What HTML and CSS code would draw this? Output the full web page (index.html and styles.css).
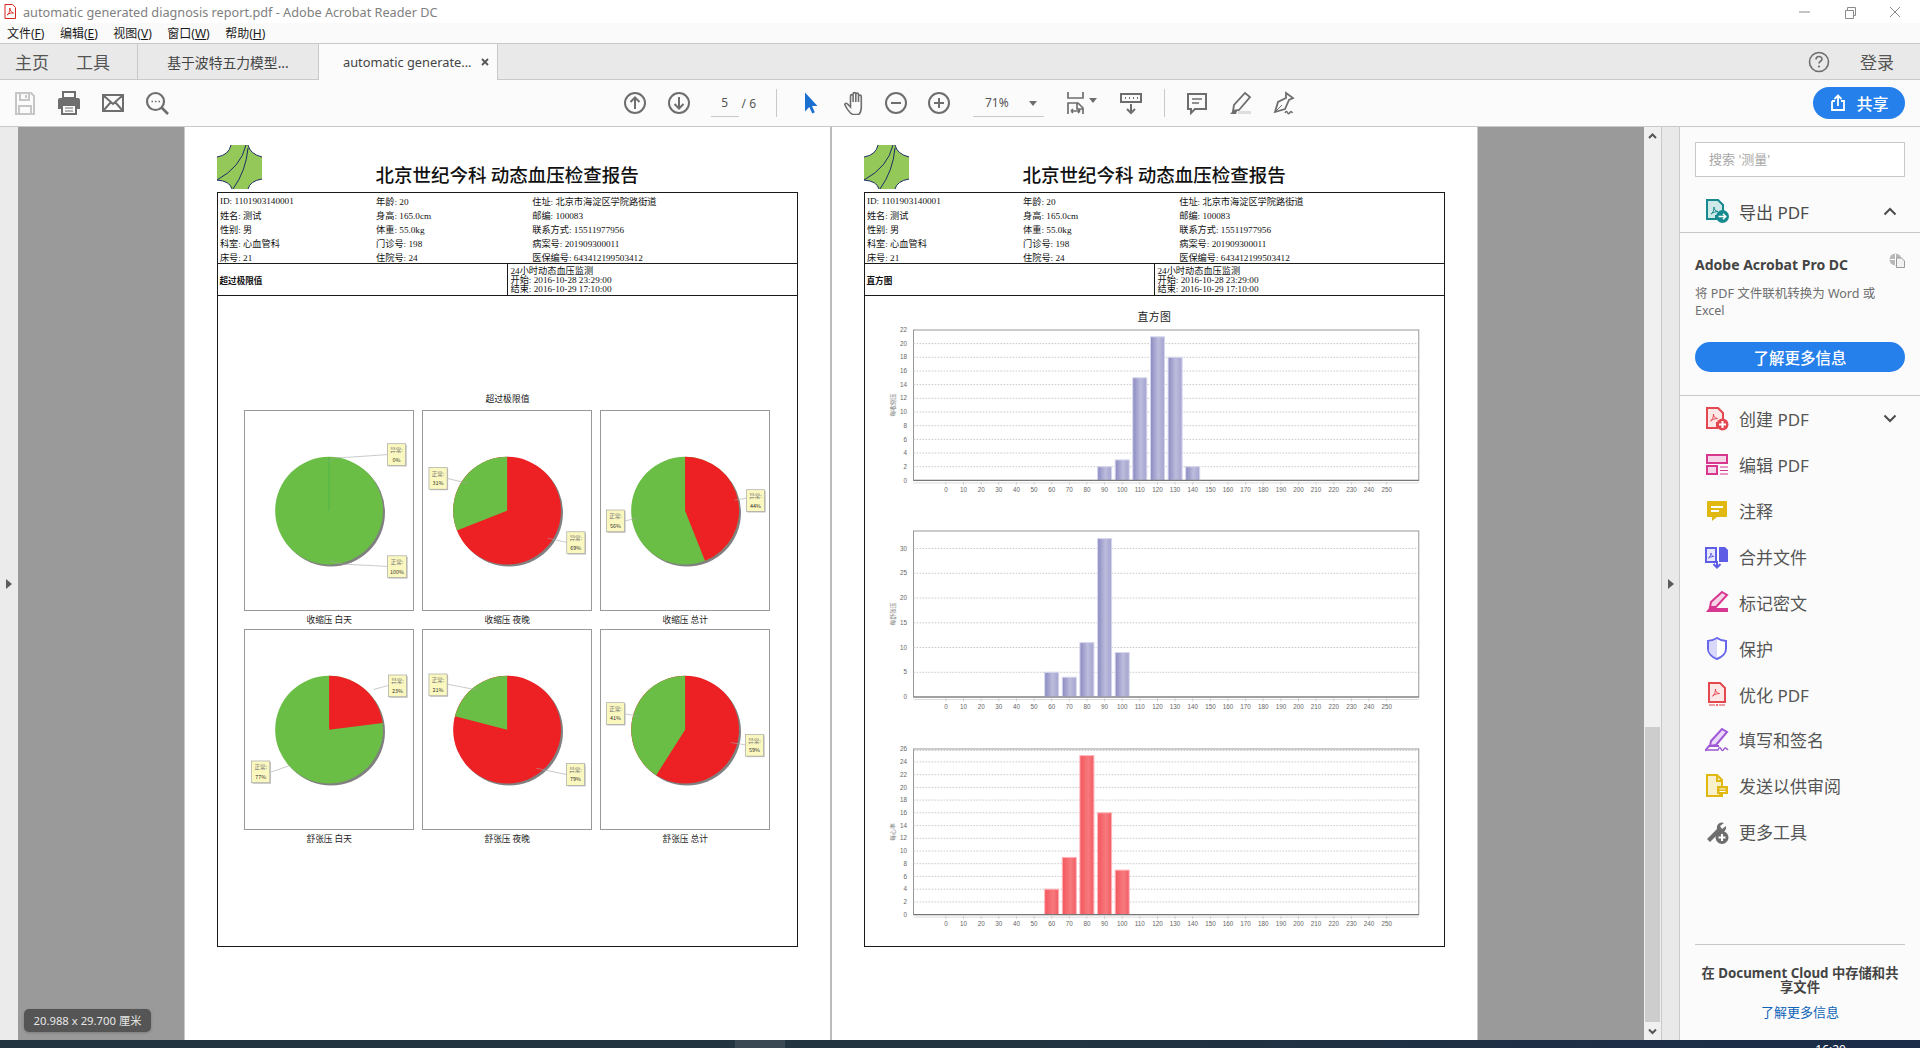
FILE: index.html
```html
<!DOCTYPE html>
<html lang="zh-CN">
<head>
<meta charset="utf-8">
<title>automatic generated diagnosis report.pdf - Adobe Acrobat Reader DC</title>
<link rel="stylesheet" href="styles.css">
</head>
<body>
<header class="titlebar">
  <svg class="appicon" viewBox="0 0 12 15"><path d="M1 .5h7.500l3 3v11H1z" fill="#fff" stroke="#d8241c"/><path d="M3 11c2-1 3-4 2.800-7 .4 3 1.700 4.500 3.700 5-2.500-.2-4.700.4-6.500 2z" fill="none" stroke="#d8241c" stroke-width=".9"/></svg>
  <span class="apptitle">automatic generated diagnosis report.pdf - Adobe Acrobat Reader DC</span>
  <div class="winctl">
    <svg viewBox="0 0 45 20"><path d="M17 10h11" stroke="#8a8a8a"/></svg>
    <svg viewBox="0 0 45 20"><path d="M18.500 8.500h8v8h-8zM20.500 8.500v-3h8v8h-2" fill="none" stroke="#8a8a8a"/></svg>
    <svg viewBox="0 0 45 20"><path d="M18 5l10 10M28 5L18 15" stroke="#8a8a8a"/></svg>
  </div>
</header>
<nav class="menubar">
  <span>文件(<u>F</u>)</span><span>编辑(<u>E</u>)</span><span>视图(<u>V</u>)</span><span>窗口(<u>W</u>)</span><span>帮助(<u>H</u>)</span>
</nav>
<div class="tabbar">
  <div class="homegroup"><span>主页</span><span>工具</span></div>
  <div class="tab">基于波特五力模型...</div>
  <div class="tab active"><span>automatic generate...</span><svg class="tabclose" viewBox="0 0 10 10"><path d="M2 2l6 6M8 2L2 8" stroke="#555" stroke-width="1.800"/></svg></div>
  <div class="tabright">
    <svg class="help" viewBox="0 0 22 22"><circle cx="11" cy="11" r="9.500" fill="none" stroke="#6e6e6e" stroke-width="1.600"/><path d="M8 8.500c0-4 6-4 6-.5 0 2.200-3 2.300-3 4.500" fill="none" stroke="#6e6e6e" stroke-width="1.600"/><circle cx="11" cy="15.500" r="1.100" fill="#6e6e6e"/></svg>
    <span>登录</span>
  </div>
</div>
<div class="toolbar">
  <div class="tgroup filegroup">
    <svg class="ic" viewBox="0 0 24 24"><path d="M3 2h15l3 3v18H3zM7 2v7h9V2M6 23v-8h12v8M13 4v3" fill="none" stroke="#c6c6c6" stroke-width="2"/></svg>
    <svg class="ic" viewBox="0 0 24 24"><path d="M6 1h12v6H6z" fill="none" stroke="#6e6e6e" stroke-width="2"/><path d="M3 7h18a2 2 0 0 1 2 2v9h-4v-4H5v4H1V9a2 2 0 0 1 2-2z" fill="#6e6e6e"/><path d="M5 14h14v9H5z" fill="#fbfbfb" stroke="#6e6e6e" stroke-width="2"/><path d="M8 17h8M8 20h8" stroke="#6e6e6e"/></svg>
    <svg class="ic" viewBox="0 0 24 24"><path d="M2 4h20v16H2zM2 4l10 9 10-9M2 20l8-9M22 20l-8-9" fill="none" stroke="#6e6e6e" stroke-width="2"/></svg>
    <svg class="ic" viewBox="0 0 24 24"><circle cx="10.500" cy="10.500" r="8.500" fill="none" stroke="#6e6e6e" stroke-width="2.200"/><path d="M16.500 16.500l6.500 6.500" stroke="#6e6e6e" stroke-width="2.600"/><path d="M6.500 10.500h1.500M10 10.500h1.500M13.500 10.500h1.500" stroke="#6e6e6e" stroke-width="1.500"/></svg>
  </div>
  <div class="tgroup navgroup">
    <svg class="ic" viewBox="0 0 24 24"><circle cx="12" cy="12" r="10" fill="none" stroke="#6e6e6e" stroke-width="2"/><path d="M12 18V6.500M7.500 11L12 6.500l4.500 4.500" fill="none" stroke="#6e6e6e" stroke-width="2"/></svg>
    <svg class="ic" viewBox="0 0 24 24"><circle cx="12" cy="12" r="10" fill="none" stroke="#6e6e6e" stroke-width="2"/><path d="M12 6v11.500M7.500 13l4.500 4.500 4.500-4.500" fill="none" stroke="#6e6e6e" stroke-width="2"/></svg>
    <div class="pagebox"><span class="pagenum">5</span><span class="pagetotal">/ 6</span></div>
    <i class="vsep"></i>
  </div>
  <div class="tgroup toolgroup">
    <svg class="ic" viewBox="0 0 24 24"><path d="M7 1.500v19l4.300-4.500 3 6.500 2.500-1.200-2.800-6.300h5.500z" fill="#1b6fd1"/></svg>
    <svg class="ic" viewBox="-3.500 0 24 24"><path d="M6 22c-2-2-4.500-5.500-5.500-8-.6-1.500 1.300-2.300 2.300-1.200L6 16V5c0-1.800 2.600-1.800 2.600 0v6-8c0-1.800 2.700-1.800 2.700 0v8-7.500c0-1.800 2.700-1.800 2.700 0V11 5.500c0-1.800 2.800-1.800 2.800 0V16c0 3-1 6-2.500 7.500H9c-1 0-2-.5-3-1.500z" fill="none" stroke="#6e6e6e" stroke-width="1.600"/></svg>
    <svg class="ic" viewBox="0 0 24 24"><circle cx="12" cy="12" r="10" fill="none" stroke="#6e6e6e" stroke-width="2"/><path d="M7 12h10" stroke="#6e6e6e" stroke-width="2"/></svg>
    <svg class="ic" viewBox="0 0 24 24"><circle cx="12" cy="12" r="10" fill="none" stroke="#6e6e6e" stroke-width="2"/><path d="M7 12h10M12 7v10" stroke="#6e6e6e" stroke-width="2"/></svg>
  </div>
  <div class="zoombox"><span>71%</span><i class="caret"></i></div>
  <div class="fitbox">
    <svg class="ic" viewBox="0 0 24 24"><path d="M5 1v6h15V1M5 23V12h10l5 5v6M14 12v6h6M8 20h9M8 20l2-2M8 20l2 2M17 20l-2-2M17 20l-2 2" fill="none" stroke="#6e6e6e" stroke-width="1.700"/></svg>
    <i class="caret"></i>
  </div>
  <svg class="ic scrollic" viewBox="0 0 24 24"><path d="M2 3h20v8H2z" fill="none" stroke="#6e6e6e" stroke-width="2"/><path d="M6 7h1M10 7h1M14 7h1M18 7h1" stroke="#6e6e6e" stroke-width="2"/><path d="M12 13v9M8 18l4 4 4-4" fill="none" stroke="#6e6e6e" stroke-width="2"/></svg>
  <i class="vsep sep2"></i>
  <div class="tgroup markgroup">
    <svg class="ic" viewBox="0 0 24 24"><path d="M3 3h18v15h-11l-4 4v-4H3z" fill="none" stroke="#6e6e6e" stroke-width="2"/><path d="M7 8h10M7 12h7" stroke="#6e6e6e" stroke-width="1.500"/></svg>
    <svg class="ic" viewBox="0 0 24 24"><path d="M17 2l5 4-11 13-6 1 1-6z" fill="none" stroke="#6e6e6e" stroke-width="1.800"/><path d="M2 23l3-3 4 0-1 3z" fill="#6e6e6e"/><path d="M10 20h13v3H10z" fill="#dedede"/></svg>
    <svg class="ic" viewBox="0 0 24 24"><path d="M15 2l7 5-4 2-4 9-10 3 3-10 8-4z" fill="none" stroke="#6e6e6e" stroke-width="1.800"/><path d="M4 21l7-7" stroke="#6e6e6e"/><path d="M14 22c1-2 2-2 2.500-.5S18 23 19 21.500s1.500-1 2.500.5" fill="none" stroke="#6e6e6e" stroke-width="1.500"/></svg>
  </div>
  <button class="share"><svg viewBox="0 0 18 18"><path d="M3 7h3M12 7h3v9H3V7" fill="none" stroke="#fff" stroke-width="1.800"/><path d="M9 12V2M5.500 5L9 1.500 12.500 5" fill="none" stroke="#fff" stroke-width="1.800"/></svg><span>共享</span></button>
</div>

<main class="workspace">
  <div class="rail leftrail"><i class="tri"></i></div>
  <section class="viewer">
    <div class="spread">
      <article class="page">
        <div class="dochead">
          <svg class="logo" viewBox="0 0 45 44"><path d="M14 0H31Q33 9 45 12V34Q33 36 31 44H15Q13 36 0 35V12Q12 10 14 0Z" fill="#94c95a"/><path d="M14 0Q12 10 0 12M31 0Q33 9 45 12M45 34Q33 36 31 44M15 44Q13 36 0 35M29 0Q24 22 0 35M31 3Q29 26 16 44" fill="none" stroke="#1c2a66"/></svg>
          <h1>北京世纪今科 动态血压检查报告</h1>
        </div>
        <div class="box">
          <div class="info">
            <span>ID: 1101903140001</span><span>年龄: 20</span><span>住址: 北京市海淀区学院路街道</span>
            <span>姓名: 测试</span><span>身高: 165.0cm</span><span>邮编: 100083</span>
            <span>性别: 男</span><span>体重: 55.0kg</span><span>联系方式: 15511977956</span>
            <span>科室: 心血管科</span><span>门诊号: 198</span><span>病案号: 201909300011</span>
            <span>床号: 21</span><span>住院号: 24</span><span>医保编号: 643412199503412</span>
          </div>
          <div class="sub">
            <div class="subname">超过极限值</div>
            <div class="subtime">24小时动态血压监测<br>开始: 2016-10-28 23:29:00<br>结束: 2016-10-29 17:10:00</div>
          </div>
          <div class="piebody">
            <div class="bodytitle">超过极限值</div>
            <div class="piegrid">
              <figure class="pie">
                <svg viewBox="0 0 170 201">
                  <circle cx="87" cy="102.700" r="54.500" class="pshadow"/>
                  <circle cx="85" cy="100.700" r="54.500" class="pgreen"/>
                  <path d="M85 100.700V46.700" stroke="#4fb648" fill="none"/>
                  <path class="lead" d="M144 44L100 47Q85 46 85 52"/><path class="lead" d="M144 157L105 155Q92 155 85 150"/>
                  <g transform="translate(144 33)"><rect class="tagshadow" x="1" y="1" width="18.400" height="22"/><rect class="tag" width="18.400" height="22"/><text class="t1" x="9.200" y="8.500">异常:</text><text class="t2" x="9.200" y="18">0%</text></g>
                  <g transform="translate(144 146.300)"><rect class="tagshadow" x="1" y="1" width="19.400" height="22"/><rect class="tag" width="19.400" height="22"/><text class="t1" x="9.700" y="8.500">正常:</text><text class="t2" x="9.700" y="18">100%</text></g>
                </svg>
                <figcaption>收缩压 白天</figcaption>
              </figure>
              <figure class="pie">
                <svg viewBox="0 0 170 201">
                  <circle cx="87" cy="102.700" r="54.500" class="pshadow"/>
                  <circle cx="85" cy="100.700" r="54.500" class="pred"/>
                  <path class="pgreen" d="M85 100.700V46.200A54.500 54.500 0 0 0 34.300 120.800Z"/>
                  <path class="lead" d="M24.400 68L45 73"/><path class="lead" d="M145.300 132.700L126 128.500"/>
                  <g transform="translate(6 57)"><rect class="tagshadow" x="1" y="1" width="18.400" height="22"/><rect class="tag" width="18.400" height="22"/><text class="t1" x="9.200" y="8.500">正常:</text><text class="t2" x="9.200" y="18">31%</text></g>
                  <g transform="translate(145.300 122)"><rect class="tagshadow" x="1" y="1" width="18.400" height="22"/><rect class="tag" width="18.400" height="22"/><text class="t1" x="9.200" y="8.500">异常:</text><text class="t2" x="9.200" y="18">69%</text></g>
                </svg>
                <figcaption>收缩压 夜晚</figcaption>
              </figure>
              <figure class="pie">
                <svg viewBox="0 0 170 201">
                  <circle cx="87" cy="102.700" r="54.500" class="pshadow"/>
                  <circle cx="85" cy="100.700" r="54.500" class="pgreen"/>
                  <path class="pred" d="M85 100.700V46.200A54.500 54.500 0 0 1 105.100 151.400Z"/>
                  <path class="lead" d="M24 111L38 108"/><path class="lead" d="M147 88L135 90"/>
                  <g transform="translate(5.400 100)"><rect class="tagshadow" x="1" y="1" width="18.400" height="22"/><rect class="tag" width="18.400" height="22"/><text class="t1" x="9.200" y="8.500">正常:</text><text class="t2" x="9.200" y="18">56%</text></g>
                  <g transform="translate(147 79.500)"><rect class="tagshadow" x="1" y="1" width="18.400" height="22"/><rect class="tag" width="18.400" height="22"/><text class="t1" x="9.200" y="8.500">异常:</text><text class="t2" x="9.200" y="18">44%</text></g>
                </svg>
                <figcaption>收缩压 总计</figcaption>
              </figure>
              <figure class="pie">
                <svg viewBox="0 0 170 201">
                  <circle cx="87" cy="102.700" r="54.500" class="pshadow"/>
                  <circle cx="85" cy="100.700" r="54.500" class="pgreen"/>
                  <path class="pred" d="M85 100.700V46.200A54.500 54.500 0 0 1 139.100 94Z"/>
                  <path class="lead" d="M145 56L130 60"/><path class="lead" d="M25 144L45 137"/>
                  <g transform="translate(145 45.400)"><rect class="tagshadow" x="1" y="1" width="18.400" height="22"/><rect class="tag" width="18.400" height="22"/><text class="t1" x="9.200" y="8.500">异常:</text><text class="t2" x="9.200" y="18">23%</text></g>
                  <g transform="translate(6.700 132.300)"><rect class="tagshadow" x="1" y="1" width="18.400" height="22"/><rect class="tag" width="18.400" height="22"/><text class="t1" x="9.200" y="8.500">正常:</text><text class="t2" x="9.200" y="18">77%</text></g>
                </svg>
                <figcaption>舒张压 白天</figcaption>
              </figure>
              <figure class="pie">
                <svg viewBox="0 0 170 201">
                  <circle cx="87" cy="102.700" r="54.500" class="pshadow"/>
                  <circle cx="85" cy="100.700" r="54.500" class="pred"/>
                  <path class="pgreen" d="M85 100.700V46.200A54.500 54.500 0 0 0 32.200 87.200Z"/>
                  <path class="lead" d="M24.600 54.700L55.600 60.700"/><path class="lead" d="M145 146L114.600 139.700"/>
                  <g transform="translate(6 44.400)"><rect class="tagshadow" x="1" y="1" width="18.400" height="22"/><rect class="tag" width="18.400" height="22"/><text class="t1" x="9.200" y="8.500">正常:</text><text class="t2" x="9.200" y="18">21%</text></g>
                  <g transform="translate(145 135)"><rect class="tagshadow" x="1" y="1" width="18.400" height="22"/><rect class="tag" width="18.400" height="22"/><text class="t1" x="9.200" y="8.500">异常:</text><text class="t2" x="9.200" y="18">79%</text></g>
                </svg>
                <figcaption>舒张压 夜晚</figcaption>
              </figure>
              <figure class="pie">
                <svg viewBox="0 0 170 201">
                  <circle cx="87" cy="102.700" r="54.500" class="pshadow"/>
                  <circle cx="85" cy="100.700" r="54.500" class="pred"/>
                  <path class="pgreen" d="M85 100.700V46.200A54.500 54.500 0 0 0 55.800 146.700Z"/>
                  <path class="lead" d="M24 84.700L38 87"/><path class="lead" d="M146 116L131.300 113.700"/>
                  <g transform="translate(5.400 73.400)"><rect class="tagshadow" x="1" y="1" width="18.400" height="22"/><rect class="tag" width="18.400" height="22"/><text class="t1" x="9.200" y="8.500">正常:</text><text class="t2" x="9.200" y="18">41%</text></g>
                  <g transform="translate(146 105.400)"><rect class="tagshadow" x="1" y="1" width="18.400" height="22"/><rect class="tag" width="18.400" height="22"/><text class="t1" x="9.200" y="8.500">异常:</text><text class="t2" x="9.200" y="18">59%</text></g>
                </svg>
                <figcaption>舒张压 总计</figcaption>
              </figure>
            </div>
          </div>
        </div>
      </article>
      <article class="page">
        <div class="dochead">
          <svg class="logo" viewBox="0 0 45 44"><path d="M14 0H31Q33 9 45 12V34Q33 36 31 44H15Q13 36 0 35V12Q12 10 14 0Z" fill="#94c95a"/><path d="M14 0Q12 10 0 12M31 0Q33 9 45 12M45 34Q33 36 31 44M15 44Q13 36 0 35M29 0Q24 22 0 35M31 3Q29 26 16 44" fill="none" stroke="#1c2a66"/></svg>
          <h1>北京世纪今科 动态血压检查报告</h1>
        </div>
        <div class="box">
          <div class="info">
            <span>ID: 1101903140001</span><span>年龄: 20</span><span>住址: 北京市海淀区学院路街道</span>
            <span>姓名: 测试</span><span>身高: 165.0cm</span><span>邮编: 100083</span>
            <span>性别: 男</span><span>体重: 55.0kg</span><span>联系方式: 15511977956</span>
            <span>科室: 心血管科</span><span>门诊号: 198</span><span>病案号: 201909300011</span>
            <span>床号: 21</span><span>住院号: 24</span><span>医保编号: 643412199503412</span>
          </div>
          <div class="sub">
            <div class="subname">直方图</div>
            <div class="subtime">24小时动态血压监测<br>开始: 2016-10-28 23:29:00<br>结束: 2016-10-29 17:10:00</div>
          </div>
          <div class="histbody">
            <div class="histtitle">直方图</div>
            <svg class="hist h1" viewBox="1 0 578 175">
              <defs>
                <linearGradient id="gblue" x1="0" x2="1" y1="0" y2="0"><stop offset="0" stop-color="#8a8ac2"/><stop offset=".55" stop-color="#bcbcdc"/><stop offset="1" stop-color="#a4a4d0"/></linearGradient>
                <linearGradient id="gred" x1="0" x2="1" y1="0" y2="0"><stop offset="0" stop-color="#f4565c"/><stop offset=".6" stop-color="#f67a7e"/><stop offset="1" stop-color="#f25c62"/></linearGradient>
                <g id="xticks">
                  <path class="axis2" d="M49.500 2.500H554.800"/>
                  <path class="tick" d="M81.900 1.500v3M99.500 1.500v3M117.200 1.500v3M134.800 1.500v3M152.400 1.500v3M170.100 1.500v3M187.700 1.500v3M205.300 1.500v3M222.900 1.500v3M240.600 1.500v3M258.200 1.500v3M275.800 1.500v3M293.500 1.500v3M311.100 1.500v3M328.700 1.500v3M346.400 1.500v3M364 1.500v3M381.600 1.500v3M399.200 1.500v3M416.900 1.500v3M434.500 1.500v3M452.100 1.500v3M469.800 1.500v3M487.400 1.500v3M505 1.500v3M522.700 1.500v3"/>
                  <text class="xl" x="81.900" y="11.500">0</text><text class="xl" x="99.500" y="11.500">10</text><text class="xl" x="117.200" y="11.500">20</text><text class="xl" x="134.800" y="11.500">30</text><text class="xl" x="152.400" y="11.500">40</text><text class="xl" x="170.100" y="11.500">50</text><text class="xl" x="187.700" y="11.500">60</text><text class="xl" x="205.300" y="11.500">70</text><text class="xl" x="222.900" y="11.500">80</text><text class="xl" x="240.600" y="11.500">90</text><text class="xl" x="258.200" y="11.500">100</text><text class="xl" x="275.800" y="11.500">110</text><text class="xl" x="293.500" y="11.500">120</text><text class="xl" x="311.100" y="11.500">130</text><text class="xl" x="328.700" y="11.500">140</text><text class="xl" x="346.400" y="11.500">150</text><text class="xl" x="364" y="11.500">160</text><text class="xl" x="381.600" y="11.500">170</text><text class="xl" x="399.200" y="11.500">180</text><text class="xl" x="416.900" y="11.500">190</text><text class="xl" x="434.500" y="11.500">200</text><text class="xl" x="452.100" y="11.500">210</text><text class="xl" x="469.800" y="11.500">220</text><text class="xl" x="487.400" y="11.500">230</text><text class="xl" x="505" y="11.500">240</text><text class="xl" x="522.700" y="11.500">250</text>
                </g>
              </defs>
              <rect class="plot" x="49.500" y="5" width="505.300" height="150.400"/>
              <path class="grid" d="M49.500 141.700H554.800M49.500 128H554.800M49.500 114.400H554.800M49.500 100.700H554.800M49.500 87H554.800M49.500 73.300H554.800M49.500 59.600H554.800M49.500 46H554.800M49.500 32.300H554.800M49.500 18.600H554.800"/>
              <g class="barsb">
                <rect x="233.600" y="141.700" width="14" height="13.700"/><rect x="251.200" y="134.900" width="14" height="20.500"/><rect x="268.800" y="52.800" width="14" height="102.600"/><rect x="286.500" y="11.800" width="14" height="143.600"/><rect x="304.100" y="32.300" width="14" height="123.100"/><rect x="321.700" y="141.700" width="14" height="13.700"/>
              </g>
              <path class="axis" d="M49.500 155.400H554.800"/>
              <g class="yl"><text x="43" y="157.500">0</text><text x="43" y="143.800">2</text><text x="43" y="130.100">4</text><text x="43" y="116.500">6</text><text x="43" y="102.800">8</text><text x="43" y="89.100">10</text><text x="43" y="75.400">12</text><text x="43" y="61.700">14</text><text x="43" y="48.100">16</text><text x="43" y="34.400">18</text><text x="43" y="20.700">20</text><text x="43" y="7.100">22</text></g>
              <text class="yt" transform="rotate(-90 31 80)" x="31" y="80">每收缩压</text>
              <use href="#xticks" y="155.400"/>
            </svg>
            <svg class="hist h2" viewBox="1 0 578 191">
              <rect class="plot" x="49.500" y="5" width="505.300" height="166"/>
              <path class="grid" d="M49.500 146.300H554.800M49.500 121.500H554.800M49.500 96.800H554.800M49.500 72H554.800M49.500 47.300H554.800M49.500 22.500H554.800"/>
              <g class="barsb">
                <rect x="180.700" y="146.300" width="14" height="24.700"/><rect x="198.300" y="151.200" width="14" height="19.800"/><rect x="215.900" y="116.600" width="14" height="54.400"/><rect x="233.600" y="12.600" width="14" height="158.400"/><rect x="251.200" y="126.500" width="14" height="44.500"/>
              </g>
              <path class="axis" d="M49.500 171H554.800"/>
              <g class="yl"><text x="43" y="173.100">0</text><text x="43" y="148.400">5</text><text x="43" y="123.600">10</text><text x="43" y="98.900">15</text><text x="43" y="74.100">20</text><text x="43" y="49.400">25</text><text x="43" y="24.600">30</text></g>
              <text class="yt" transform="rotate(-90 31 88)" x="31" y="88">每舒张压</text>
              <use href="#xticks" y="171"/>
            </svg>
            <svg class="hist h3" viewBox="1 0 578 191">
              <rect class="plot" x="49.500" y="5" width="505.300" height="165.600"/>
              <path class="grid" d="M49.500 157.900H554.800M49.500 145.200H554.800M49.500 132.400H554.800M49.500 119.700H554.800M49.500 107H554.800M49.500 94.300H554.800M49.500 81.600H554.800M49.500 68.800H554.800M49.500 56.100H554.800M49.500 43.400H554.800M49.500 30.700H554.800M49.500 17.900H554.800M49.500 6.500H554.800"/>
              <g class="barsr">
                <rect x="180.700" y="145.200" width="14" height="25.400"/><rect x="198.300" y="113.400" width="14" height="57.200"/><rect x="215.900" y="11.600" width="14" height="159"/><rect x="233.600" y="68.800" width="14" height="101.800"/><rect x="251.200" y="126.100" width="14" height="44.500"/>
              </g>
              <path class="axis" d="M49.500 170.600H554.800"/>
              <g class="yl"><text x="43" y="172.700">0</text><text x="43" y="160">2</text><text x="43" y="147.300">4</text><text x="43" y="134.500">6</text><text x="43" y="121.800">8</text><text x="43" y="109.100">10</text><text x="43" y="96.400">12</text><text x="43" y="83.700">14</text><text x="43" y="70.900">16</text><text x="43" y="58.200">18</text><text x="43" y="45.500">20</text><text x="43" y="32.800">22</text><text x="43" y="20">24</text><text x="43" y="7.300">26</text></g>
              <text class="yt" transform="rotate(-90 31 88)" x="31" y="88">每心率</text>
              <use href="#xticks" y="170.600"/>
            </svg>
          </div>
        </div>
      </article>
    </div>
    <div class="sizetip">20.988 x 29.700 厘米</div>
  </section>
  <div class="scrollbar">
    <svg class="sbarrow" viewBox="0 0 17 18"><path d="M5 11l3.500-3.500L12 11" fill="none" stroke="#555" stroke-width="2"/></svg>
    <div class="thumb"></div>
    <svg class="sbarrow" viewBox="0 0 17 17"><path d="M5 7l3.500 3.500L12 7" fill="none" stroke="#555" stroke-width="2"/></svg>
  </div>
  <div class="rail rightrail"><i class="tri"></i></div>
  <aside class="panel">
    <div class="search">搜索 '测量'</div>
    <div class="exporthead">
      <svg class="tic" viewBox="0 0 24 24"><path d="M2 1h11l5 5v11h-7v3H2z" fill="#cfe8e8" stroke="#168a8f" stroke-width="2"/><path d="M6 15c2-1 3-4 3-7 0 3 1.500 4 4 4.500-2.500 0-5 1-7 2.500z" fill="none" stroke="#168a8f"/><circle cx="17.500" cy="17.500" r="6.500" fill="#168a8f"/><path d="M13.500 17.500h7M18 14.800l2.700 2.700-2.700 2.700" fill="none" stroke="#fff" stroke-width="1.500"/></svg>
      <span>导出 PDF</span>
      <svg class="chev" viewBox="0 0 14 9"><path d="M1.500 7.500L7 2l5.500 5.500" fill="none" stroke="#4b4b4b" stroke-width="2"/></svg>
    </div>
    <div class="promo">
      <div class="promohead"><b>Adobe Acrobat Pro DC</b><svg viewBox="0 0 16 15"><circle cx="6.500" cy="6.500" r="6" fill="#b8b8b8"/><path d="M1 6.500h11M6.500 1v11" stroke="#fff"/><path d="M7.500 5h5l3 3v6.500h-8z" fill="#f2f2f2" stroke="#9a9a9a"/></svg></div>
      <p>将 PDF 文件联机转换为 Word 或 Excel</p>
      <button class="more">了解更多信息</button>
    </div>
    <ul class="tools">
      <li class="withchev"><svg class="tic" viewBox="0 0 24 24"><path d="M2 1h11l5 5v10h-6v5H2z" fill="#fde8e8" stroke="#e34850" stroke-width="2"/><path d="M5.500 14c2-1 3-4 3-7 0 3 1.500 4 4 4.500-2.500 0-5 1-7 2.500z" fill="none" stroke="#e34850"/><circle cx="17.500" cy="17.500" r="6" fill="#e34850"/><path d="M14 17.500h7M17.500 14v7" stroke="#fff" stroke-width="2"/></svg><span>创建 PDF</span><svg class="chev" viewBox="0 0 14 9"><path d="M1.500 1.500L7 7l5.500-5.500" fill="none" stroke="#4b4b4b" stroke-width="2"/></svg></li>
      <li><svg class="tic" viewBox="0 0 24 24"><path d="M2 2h20v8H2z" fill="#f6d5e7" stroke="#d83790" stroke-width="2"/><path d="M2 13h10v8H2z" fill="#f6d5e7" stroke="#d83790" stroke-width="2"/><path d="M15 14h8M15 17.500h8M15 21h8" stroke="#d83790" stroke-width="1.200"/></svg><span>编辑 PDF</span></li>
      <li><svg class="tic" viewBox="0 0 24 24"><path d="M3 2h18a1 1 0 0 1 1 1v14a1 1 0 0 1-1 1h-9l-5 4v-4H3a1 1 0 0 1-1-1V3a1 1 0 0 1 1-1z" fill="#e0b80f"/><path d="M6 8h12M6 12h8" stroke="#fff" stroke-width="2"/></svg><span>注释</span></li>
      <li><svg class="tic" viewBox="0 0 24 24"><path d="M1 3h10v14H1z" fill="#e8e8fc" stroke="#5d5de6" stroke-width="2"/><path d="M3.500 13c1.500-1 2.500-3 2.500-5 0 2 1 3 3 3.500-2 0-3.800.5-5.500 1.500z" fill="none" stroke="#5d5de6"/><path d="M14 2h6l3 3v12h-9z" fill="#5d5de6"/><path d="M12 16v6M8.500 19l3.500 3.500 3.500-3.500" fill="none" stroke="#5d5de6" stroke-width="2"/></svg><span>合并文件</span></li>
      <li><svg class="tic" viewBox="0 0 24 24"><path d="M17 2l5 3-11 12H5l1-5z" fill="#f6d5e7" stroke="#d83790" stroke-width="2"/><path d="M1 22l3-4h19v4z" fill="#d83790"/></svg><span>标记密文</span></li>
      <li><svg class="tic" viewBox="0 0 24 24"><path d="M12 2c3 2 6 3 9 3v8c0 4-4 8-9 10-5-2-9-6-9-10V5c3 0 6-1 9-3z" fill="#fff" stroke="#6767ec" stroke-width="2"/><path d="M12 3c-3 1.800-5.500 2.800-8 3v7c0 3.500 3.500 7 8 9z" fill="#d8d8fa"/></svg><span>保护</span></li>
      <li><svg class="tic" viewBox="0 0 24 24"><path d="M4 1h11l5 5v14H4z" fill="#fde8e8" stroke="#e34850" stroke-width="2"/><path d="M7.500 14c2-1 3-4 3-7 0 3 1.500 4 4 4.500-2.500 0-5 1-7 2.500z" fill="none" stroke="#e34850"/><path d="M4 23h6M14 23h6" stroke="#e34850"/><circle cx="12" cy="23" r="1" fill="#e34850"/></svg><span>优化 PDF</span></li>
      <li><svg class="tic" viewBox="0 0 24 24"><path d="M17 1l5 3-11 13-6 1 1-5z" fill="#ead9f8" stroke="#9e57d5" stroke-width="2"/><path d="M0 23l4-5h10" fill="none" stroke="#9e57d5" stroke-width="2"/><path d="M1 22h12c1-3 2-3 3-1s2 2 3 0 2-1 4 1" fill="none" stroke="#9e57d5" stroke-width="1.500"/></svg><span>填写和签名</span></li>
      <li><svg class="tic" viewBox="0 0 24 24"><path d="M2 1h10l5 5v16H2z" fill="#f8f1cb" stroke="#e0b80f" stroke-width="2"/><path d="M12 1v6h5" fill="none" stroke="#e0b80f" stroke-width="2"/><path d="M12 12h11v8h-6l-3 3v-3h-2z" fill="#e0b80f"/><path d="M14.500 15h6M14.500 17.500h6" stroke="#fff"/></svg><span>发送以供审阅</span></li>
      <li><svg class="tic" viewBox="0 0 24 24"><path d="M2 19L12 9c-1-4 3-8 7-6l-4 3 2 3 4-3c1 4-3 8-7 7L5 22z" fill="#6e6e6e"/><circle cx="17" cy="17.500" r="6.500" fill="#6e6e6e"/><path d="M13.500 17.500h7M17 14v7" stroke="#fff" stroke-width="2"/></svg><span>更多工具</span></li>
    </ul>
    <footer class="cloud">
      <div class="cloudtext">在 Document Cloud 中存储和共享文件</div>
      <div class="cloudlink">了解更多信息</div>
    </footer>
  </aside>
</main>
<div class="taskbar"><i class="tasklight"></i><span class="clock">16:20</span></div>
</body>
</html>
```
FILE: styles.css
```css
* { box-sizing: border-box; }
html, body { margin: 0; padding: 0; }
body {
  width: 1920px; height: 1048px; overflow: hidden;
  display: flex; flex-direction: column;
  font-family: "Noto Sans", "Noto Sans CJK SC", sans-serif;
  color: #4b4b4b; background: #fff;
}
svg { display: block; flex: none; }
i { display: block; }

/* title bar */
.titlebar { height: 23px; display: flex; align-items: center; background: #fff; flex: none; }
.appicon { width: 12px; height: 15px; margin-left: 4px; }
.apptitle { margin-left: 7px; font-size: 12.700px; color: #808080; }
.winctl { margin-left: auto; display: flex; padding-right: 3px; }
.winctl svg { width: 45px; height: 20px; }

.menubar { height: 21px; display: flex; gap: 15.500px; padding: 0 0 1px 7px; align-items: center; background: #fafafa; border-bottom: 1px solid #c9c9c9; font-size: 12px; color: #1a1a1a; flex: none; }

/* tabs */
.tabbar { height: 36px; display: flex; background: #e9e9e9; border-bottom: 1px solid #c9c9c9; flex: none; }
.homegroup { width: 137px; display: flex; gap: 27px; padding-left: 15px; align-items: center; font-size: 17px; color: #555; }
.tab { width: 181px; display: flex; align-items: center; justify-content: center; border-left: 1px solid #c9c9c9; font-size: 13.800px; color: #444; white-space: nowrap; }
.tab.active { width: 180px; height: 36px; background: #fbfbfb; border-right: 1px solid #c9c9c9; justify-content: flex-start; padding-left: 24px; font-size: 12.800px; }
.tabclose { width: 10px; height: 10px; margin-left: 8px; }
.tabright { margin-left: auto; display: flex; align-items: center; gap: 30px; padding-right: 26px; font-size: 17px; color: #555; }
.help { width: 22px; height: 22px; }

/* toolbar */
.toolbar { height: 47px; display: flex; align-items: center; background: #fbfbfb; border-bottom: 1px solid #c9c9c9; flex: none; }
.tgroup { display: flex; align-items: center; }
.ic { width: 24px; height: 24px; }
.filegroup { gap: 20px; margin-left: 13px; width: 156px; }
.navgroup { gap: 20px; margin-left: 454px; }
.pagebox { width: 45px; display: flex; font-size: 12px; color: #555; align-items: center; white-space: nowrap; }
.pagenum { width: 28px; text-align: center; border-bottom: 1px solid #c9c9c9; line-height: 26px; margin-top: 1px; }
.pagetotal { margin-left: 3px; }
.vsep { width: 1px; height: 28px; background: #c9c9c9; }
.toolgroup { gap: 19px; margin-left: 21px; }
.zoombox { width: 71px; margin-left: 22px; display: flex; align-items: center; border-bottom: 1px solid #c9c9c9; line-height: 26px; font-size: 12px; color: #555; padding-left: 12px; margin-top: 1px; }
.zoombox .caret { margin-left: 20px; }
.caret { width: 0; height: 0; border-left: 4px solid transparent; border-right: 4px solid transparent; border-top: 5px solid #6e6e6e; }
.fitbox { display: flex; align-items: center; gap: 2px; margin-left: 19px; }
.fitbox .caret { margin-bottom: 6px; }
.scrollic { margin-left: 22px; }
.sep2 { margin-left: 21px; }
.markgroup { gap: 19px; margin-left: 20px; }
.share { margin: 0 15px 0 auto; width: 92px; height: 32px; border: 0; border-radius: 16px; background: #2680eb; color: #fff; display: flex; align-items: center; justify-content: center; gap: 9px; font: 500 16px "Noto Sans CJK SC", sans-serif; padding: 0; }
.share svg { width: 18px; height: 18px; }

/* work area */
.workspace { flex: 1; display: flex; min-height: 0; }
.rail { width: 18px; background: #ebebeb; display: flex; align-items: center; justify-content: center; flex: none; }
.tri { width: 0; height: 0; border-top: 5px solid transparent; border-bottom: 5px solid transparent; border-left: 6px solid #5c5c5c; }
.viewer { flex: none; width: 1626px; background: #9a9a9a; position: relative; display: flex; justify-content: center; overflow: hidden; }
.spread { flex: none; display: flex; gap: 2px; background: #bbb; border: solid #c9c9c9; border-width: 0 1px; }
.page { flex: none; width: 645px; background: #fff; padding: 18px 0 0 31.700px; font-family: "Liberation Serif", "Noto Sans CJK SC", serif; color: #111; }
.sizetip { position: absolute; left: 6px; bottom: 8px; width: 127px; height: 23px; border-radius: 5px; background: #555; color: #e6e6e6; font: 11.300px/23px "Noto Sans", "Noto Sans CJK SC", sans-serif; text-align: center; box-shadow: 0 1px 3px rgba(0,0,0,.2); }
.scrollbar { width: 17px; background: #f0f0f0; display: flex; flex-direction: column; align-items: center; flex: none; }
.sbarrow { width: 17px; height: 18px; }
.thumb { width: 15px; height: 295px; background: #cdcdcd; margin-top: auto; }
.rightrail { width: 19px; border: solid #c9c9c9; border-width: 0 1px; background: #e9e9e9; }

/* document */
.dochead { width: 581px; height: 47px; display: grid; grid-template-columns: 45px 1fr 45px; }
.logo { width: 45px; height: 44px; }
.dochead h1 { margin: 0; grid-column: 2; align-self: end; padding-bottom: 7px; text-align: center; font: 500 18.500px/22px "Noto Sans CJK SC", sans-serif; color: #111; white-space: nowrap; }
.box { width: 581px; height: 755px; border: 1px solid #1a1a1a; font-size: 9.200px; }
.info { height: 71px; padding: .5px 0 0 2.200px; display: grid; grid-template-columns: 156.200px 156.200px 1fr; grid-auto-rows: 14.100px; align-items: center; border-bottom: 1px solid #1a1a1a; }
.sub { height: 32px; display: grid; grid-template-columns: 289.800px 1fr; border-bottom: 1px solid #1a1a1a; }
.subname { padding-left: 1.800px; align-self: center; font-weight: 700; font-size: 8.600px; }
.subtime { border-left: 1px solid #1a1a1a; padding: 3px 0 0 2px; line-height: 8.800px; }
.piebody { padding-top: 97px; }
.bodytitle { width: 579.600px; text-align: center; font: 8.800px/12px "Noto Sans CJK SC", sans-serif; }
.piegrid { margin: 5.300px 0 0 26.400px; display: grid; grid-template-columns: repeat(3, 170.200px); column-gap: 7.800px; }
.pie { margin: 0; }
.pie svg { width: 170.200px; height: 201px; border: 1px solid #999; box-sizing: border-box; }
.pie figcaption { height: 18px; text-align: center; font: 8.700px/18px "Noto Sans CJK SC", sans-serif; color: #222; }
.pshadow { fill: #808080; }
.pgreen { fill: #6abd45; }
.pred { fill: #ed2024; }
.lead { fill: none; stroke: #a5a5a5; stroke-width: .6; }
.tag { fill: #fbf8bf; stroke: #a8a8a8; stroke-width: .7; }
.tagshadow { fill: #bdbdbd; }
.t1, .t2 { text-anchor: middle; font: 5.500px "Noto Sans CJK SC", sans-serif; }
.t1 { fill: #777; }
.t2 { fill: #333; }

.histbody { padding-top: 14px; }
.histtitle { width: 579.600px; text-align: center; font: 10.800px/12px "Noto Sans CJK SC", sans-serif; letter-spacing: .5px; color: #222; }
.hist { width: 578px; margin-left: .800px; }
.h1 { height: 175px; margin-top: 3.300px; }
.h2 { height: 191px; margin-top: 25.700px; }
.h3 { height: 191px; margin-top: 26.700px; }
.plot { fill: #fff; stroke: #8e8e8e; stroke-width: .9; }
.grid { fill: none; stroke: #bcbcbc; stroke-width: .8; stroke-dasharray: 1.600 1.400; }
.axis { fill: none; stroke: #777; stroke-width: 1.200; }
.axis2 { fill: none; stroke: #dcdcdc; stroke-width: 1; }
.tick { stroke: #bbb; stroke-width: .6; fill: none; }
.barsb rect { fill: url(#gblue); stroke: #d6d6ee; stroke-width: 1; }
.barsr rect { fill: url(#gred); stroke: #ffb4bc; stroke-width: 1; }
.xl { text-anchor: middle; font: 6.300px "Liberation Sans", sans-serif; fill: #666; }
.yl text { text-anchor: end; font: 6.300px "Liberation Sans", sans-serif; fill: #666; }
.yt { text-anchor: middle; font: 5.800px "Noto Sans CJK SC", sans-serif; fill: #777; }

/* right panel */
.panel { flex: none; width: 240px; background: #fbfbfb; display: flex; flex-direction: column; min-width: 0; }
.search { margin: 15px 15px 0; height: 35px; border: 1px solid #c9c9c9; background: #fff; padding-left: 13px; font-size: 13px; line-height: 33px; color: #a8a8a8; flex: none; }
.exporthead { margin-top: 13px; height: 43px; padding: 0 15px 0 25px; display: flex; align-items: center; gap: 10px; border-bottom: 1px solid #c9c9c9; font-size: 17px; flex: none; }
.tic { width: 24px; height: 24px; }
.chev { width: 14px; height: 9px; margin-left: auto; margin-right: 8px; }
.promo { padding: 21px 15px 23px; border-bottom: 1px solid #c9c9c9; flex: none; }
.promohead { display: flex; align-items: center; justify-content: space-between; height: 20px; font-size: 14px; color: #444; }
.promohead svg { width: 16px; height: 15px; margin-top: -7px; }
.promo p { margin: 10.500px 0 0; font-size: 12.500px; line-height: 17px; color: #6e6e6e; height: 34px; }
.more { display: block; margin-top: 23.500px; width: 210px; height: 30px; border: 0; padding: 0; border-radius: 15px; background: #2680eb; color: #fff; font: 500 15.500px "Noto Sans CJK SC", sans-serif; }
.tools { list-style: none; margin: 0; padding: 0; flex: none; }
.tools li { height: 45.870px; padding: 0 15px 0 25px; display: flex; align-items: center; gap: 10px; font-size: 17px; color: #555; }
.cloud { margin: auto 15px 0; border-top: 1px solid #c9c9c9; padding: 21px 5px 20px; text-align: center; }
.cloudtext { font: 700 13.300px/14px "Noto Sans", "Noto Sans CJK SC", sans-serif; color: #444; }
.cloudlink { margin-top: 10px; font-size: 13px; line-height: 16px; color: #0f64b8; }

/* taskbar */
.taskbar { height: 8px; flex: none; overflow: hidden; position: relative; display: flex; background: linear-gradient(90deg, #22343f 0, #22343f 50%, #1b2c49 100%); }
.tasklight { position: absolute; left: 735px; top: 0; width: 50px; height: 8px; background: #3a4853; }
.clock { margin-left: auto; margin-right: 74px; font: 12px/18px "Noto Sans", sans-serif; color: #fff; padding-top: 1px; }
```
